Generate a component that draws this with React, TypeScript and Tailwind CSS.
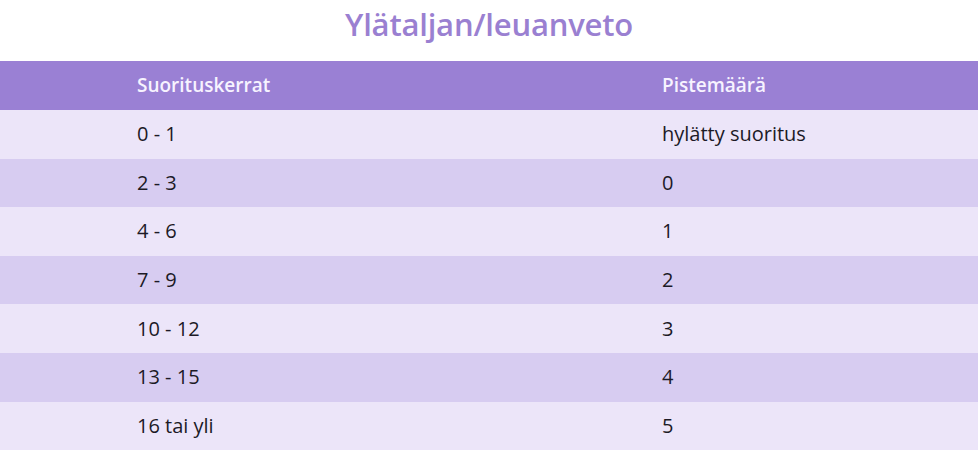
const rows: [string, string][] = [
  ["0 - 1", "hylätty suoritus"],
  ["2 - 3", "0"],
  ["4 - 6", "1"],
  ["7 - 9", "2"],
  ["10 - 12", "3"],
  ["13 - 15", "4"],
  ["16 tai yli", "5"],
];

export default function App() {
  return (
    <div className="w-[978px] h-[450px] bg-white overflow-hidden" style={{ fontFamily: '"Open Sans", "Noto Sans", sans-serif' }}>
      <h2 className="h-[61px] flex items-center justify-center pb-[12px] text-[31px] font-semibold text-[#9a80d1] tracking-[-0.2px]">
        Ylätaljan/leuanveto
      </h2>
      <div className="grid grid-cols-[662px_1fr] h-[49px] items-center bg-[#9a80d4] text-[19px] font-semibold text-[#f7f3ff]">
        <div className="pl-[137px]">Suorituskerrat</div>
        <div>Pistemäärä</div>
      </div>
      {rows.map(([a, b], i) => (
        <div
          key={a}
          className={
            "grid grid-cols-[662px_1fr] h-[48.6px] items-center text-[20px] text-[#1c1a26] " +
            (i % 2 === 0 ? "bg-[#ece5f9]" : "bg-[#d7ccf1]")
          }
        >
          <div className="pl-[137px]">{a}</div>
          <div>{b}</div>
        </div>
      ))}
    </div>
  );
}
